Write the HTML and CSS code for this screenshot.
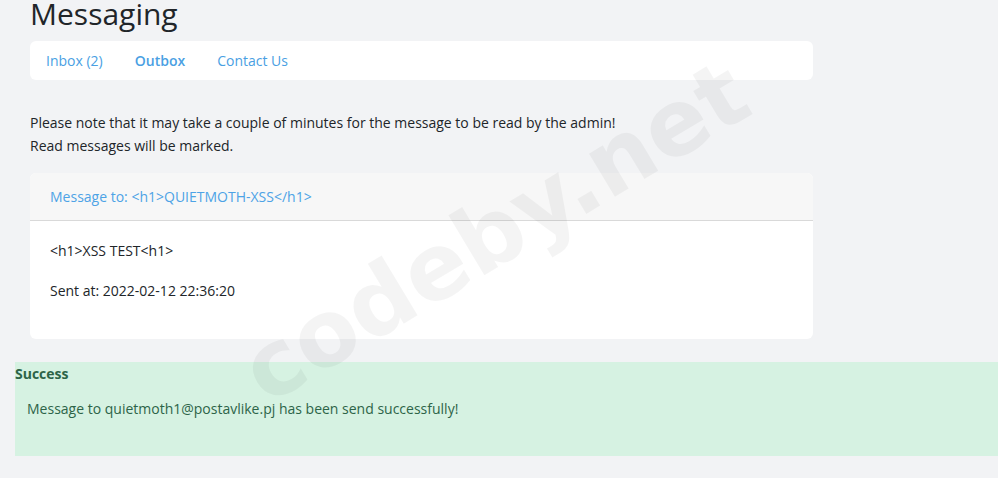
FILE: index.html
```html
<!DOCTYPE html>
<html lang="en">
<head>
    <meta charset="UTF-8">
    <meta name="viewport" content="width=device-width, initial-scale=1.0">
    <title>Messaging</title>
    <link rel="stylesheet" href="styles.css">
</head>
<body>

    <div class="page">
        <h1 class="page-title">Messaging</h1>

        <div class="tabs">
            <a class="tab" href="#">Inbox (2)</a>
            <a class="tab active" href="#">Outbox</a>
            <a class="tab" href="#">Contact Us</a>
        </div>

        <div class="note">
            <p>Please note that it may take a couple of minutes for the message to be read by the admin!</p>
            <p>Read messages will be marked.</p>
        </div>

        <div class="message-card">
            <div class="message-header">Message to: &lt;h1&gt;QUIETMOTH-XSS&lt;/h1&gt;</div>
            <div class="message-body">
                <p>&lt;h1&gt;XSS TEST&lt;h1&gt;</p>
                <p>Sent at: 2022-02-12 22:36:20</p>
            </div>
        </div>
    </div>

    <!-- Flash message -->
    <div class="alert-success">
        <div class="alert-title">Success</div>
        <div class="alert-text">Message to quietmoth1@postavlike.pj has been send successfully!</div>
    </div>

    <div class="watermark">codeby.net</div>

</body>
</html>
```

FILE: styles.css
```css
body {
    font-family: 'Open Sans', 'Noto Sans', sans-serif;
    background-color: #f2f3f5;
    color: #212529;
    margin: 0;
    padding: 0;
    height: 100vh;
    overflow: hidden;
    position: relative;
}

.page {
    width: 783px;
    padding-left: 30px;
}

.page-title {
    font-size: 30px;
    font-weight: 400;
    line-height: 28px;
    margin: 0 0 13px;
    color: #212529;
}

.tabs {
    display: flex;
    height: 39px;
    align-items: center;
    background-color: #fff;
    border-radius: 6px;
}

.tab {
    font-size: 14px;
    color: #4a9fe3;
    text-decoration: none;
    padding: 0 16px;
}

.tab.active {
    font-weight: 600;
}

.note {
    margin-top: 31px;
}

.note p {
    font-size: 14px;
    line-height: 23px;
    margin: 0;
}

.message-card {
    margin-top: 16px;
    background-color: #fff;
    border-radius: 6px;
    overflow: hidden;
}

.message-header {
    background-color: #f7f7f7;
    border-bottom: 1px solid #d9d9d9;
    color: #4da3e6;
    font-size: 14px;
    line-height: 22px;
    padding: 13px 20px 12px;
}

.message-body {
    padding: 18px 20px 20px;
}

.message-body p {
    font-size: 14px;
    line-height: 24px;
    margin: 0 0 16px;
}

.alert-success {
    margin: 23px 0 0 15px;
    background-color: #d6f2e2;
    color: #2d6448;
    height: 94px;
}

.alert-title {
    font-size: 14px;
    font-weight: 700;
    line-height: 24px;
}

.alert-text {
    font-size: 14px;
    line-height: 22px;
    padding: 12px;
}

/* Watermark over the page */
.watermark {
    position: absolute;
    left: 495px;
    top: 232px;
    transform: translate(-50%, -50%) rotate(-31deg);
    font-family: 'DejaVu Sans', sans-serif;
    font-weight: bold;
    font-size: 92px;
    color: rgba(0, 0, 0, 0.045);
    white-space: nowrap;
    pointer-events: none;
}
```
